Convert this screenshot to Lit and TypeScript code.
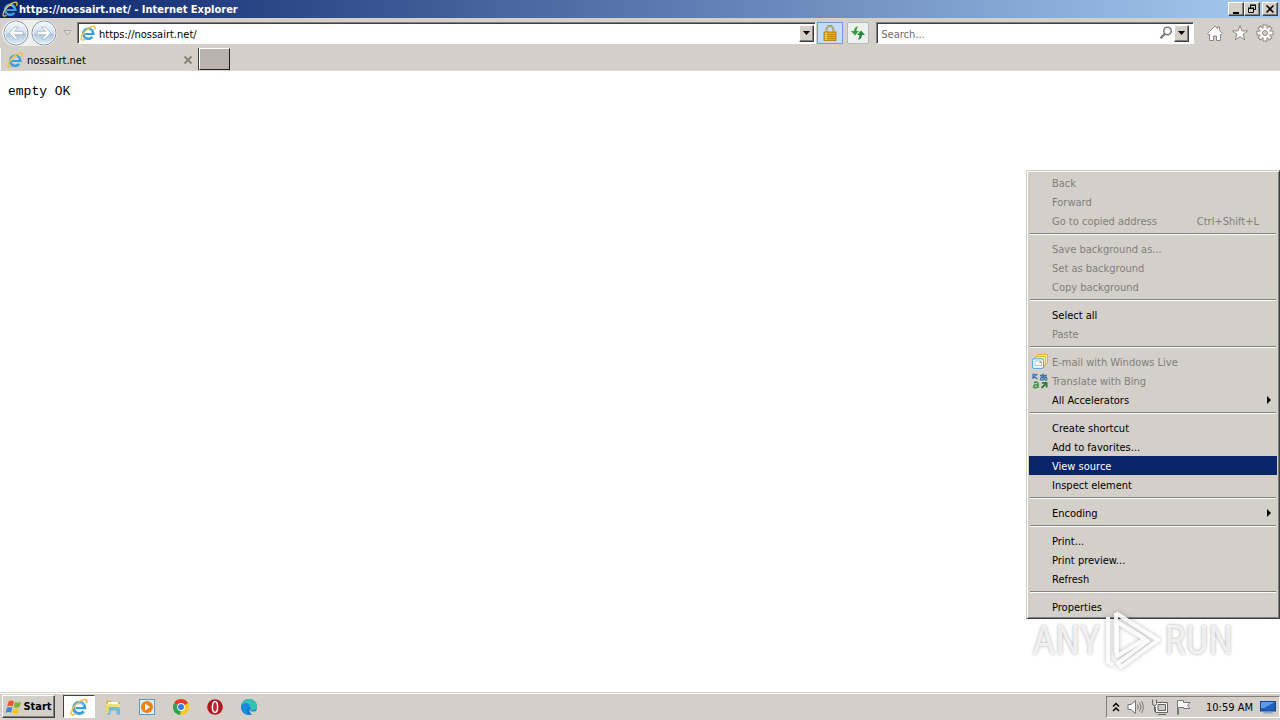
import { LitElement, html, css, svg, nothing } from "lit";
import { customElement, state } from "lit/decorators.js";
import { classMap } from "lit/directives/class-map.js";

type Entry = { label: string; off?: boolean; key?: string; sub?: boolean; icon?: unknown };

const ieLogo = html`<svg class="ico" viewBox="0 0 16 16" aria-hidden="true">
  <circle cx="8.2" cy="8.8" r="5" fill="none" stroke="#3a9fe0" stroke-width="2.600" />
  <path d="M5 9h9.4" stroke="#3a9fe0" stroke-width="2" />
  <path d="M10.6 10.1h5v2.2h-3.2z" fill="var(--cut, #fff)" />
  <path d="M4.2 8.2a4.2 4.2 0 0 1 7.8-1.6" fill="none" stroke="#9be0fb" stroke-width="1" />
  <path d="M4.500 14.4c-2 1.200-3.800.8-3.300-1.400C1.800 10 4.800 5.800 8.200 3.400c3.200-2.200 6-2.700 6.700-1.500.4.800 0 2-.4 2.800" fill="none" stroke="#edbf3c" stroke-width="1.400" />
</svg>`;

const mailIcon = html`<svg class="ico" viewBox="0 0 16 16" aria-hidden="true">
  <path d="M5.500 3V.7h10v8.600h-2" fill="#fff2b8" stroke="#e8b21a" />
  <path d="M3.500 5V2.700h10v8.600h-2" fill="#fff2b8" stroke="#e8b21a" />
  <rect x=".6" y="4.800" width="11" height="9.600" rx="1.500" fill="#f2faff" stroke="#4aa3d8" />
  <rect x="3" y="7" width="6.500" height="4.600" fill="#fff" stroke="#8cbbe0" stroke-width=".8" />
  <path d="M7.500 7.500h1.500v1.500h-1.500z" fill="#e77a28" />
</svg>`;

const translateIcon = html`<svg class="ico" viewBox="0 0 16 16" aria-hidden="true">
  <g fill="none" stroke-width="1.300">
    <path d="M1 1v5M5.500 1.200 2 3.500l3.500 2.500M1 1.300h2.500" stroke="#3a76a8" />
    <path d="M8 2.500h7M11 .6c-.6 2.400-.4 4.400.6 6.200M14 3.600c-.8 2.200-2.600 3.600-4.600 3.500-1.600-.4-1-2.800 1.400-3.100 2.600-.3 4.700.5 4 2.500-.3.600-1 .9-1.600 1" stroke="#3a76a8" />
    <path d="M2 9.800c1.600-1.200 4-.8 4 1v4M6 11.800c-2.400-.2-4.400.3-4.400 1.700 0 1.800 3.400 1.500 4.400-.4" stroke="#3d9a45" stroke-width="1.600" />
    <path d="M9.500 15 14 10.500M10 9.800h4.600v4.700" stroke="#2c8038" stroke-width="1.800" />
  </g>
</svg>`;

const groups: Entry[][] = [
  [
    { label: "Back", off: true },
    { label: "Forward", off: true },
    { label: "Go to copied address", off: true, key: "Ctrl+Shift+L" },
  ],
  [
    { label: "Save background as...", off: true },
    { label: "Set as background", off: true },
    { label: "Copy background", off: true },
  ],
  [{ label: "Select all" }, { label: "Paste", off: true }],
  [
    { label: "E-mail with Windows Live", off: true, icon: mailIcon },
    { label: "Translate with Bing", off: true, icon: translateIcon },
    { label: "All Accelerators", sub: true },
  ],
  [
    { label: "Create shortcut" },
    { label: "Add to favorites..." },
    { label: "View source" },
    { label: "Inspect element" },
  ],
  [{ label: "Encoding", sub: true }],
  [{ label: "Print..." }, { label: "Print preview..." }, { label: "Refresh" }],
  [{ label: "Properties" }],
];

const shared = css`
  * { box-sizing: border-box; }
  button, input {
    font: inherit; color: inherit; margin: 0; padding: 0; border: 0;
    border-radius: 0; background: none; outline: none;
  }
  button { display: flex; align-items: center; justify-content: center; flex: none; }
  svg { display: block; flex: none; }
  .ico { width: 16px; height: 16px; }
  .raised {
    background: #d4d0c8;
    border: 1px solid; border-color: #fff #404040 #404040 #fff;
    box-shadow: inset -1px -1px #808080;
  }
`;

@customElement("context-menu")
export class ContextMenu extends LitElement {
  @state() active = "View source";

  static styles = [shared, css`
    :host {
      display: block; padding: 1px; background: #d4cfc8;
      border: 1px solid; border-color: #d4d0c8 #404040 #404040 #d4d0c8;
      box-shadow: inset 1px 1px #fff, inset -1px -1px #808080;
    }
    .menu { padding: 1px; }
    .item {
      display: grid; grid-template-columns: 16px 1fr auto 8px; column-gap: 4px;
      width: 100%; height: 19px; padding: 0 4px 0 3px; text-align: left; white-space: nowrap;
      line-height: 17px;
    }
    .item span { padding-top: 2px; }
    .item .pic { padding: 0; }
    .item.off { color: #808080; }
    .item.on { background: #0a246a; color: #fff; }
    .sep { height: 2px; margin: 3px 1px 4px; background: #808080; border-bottom: 1px solid #fff; }
    .key { padding-right: 2px; }
    .arrow { width: 8px; height: 8px; }
  `];

  render() {
    return html`<div class="menu" role="menu">
      ${groups.map((g, i) => html`
        ${i ? html`<div class="sep" role="separator"></div>` : nothing}
        ${g.map((e) => html`<button
          role="menuitem"
          ?disabled=${!!e.off}
          class=${classMap({ item: true, off: !!e.off, on: e.label === this.active })}
          @mouseenter=${() => (this.active = e.label)}
        >
          <span class="pic">${e.icon ?? nothing}</span><span>${e.label}</span>
          <span class="key">${e.key ?? nothing}</span>
          ${e.sub ? html`<svg class="arrow" viewBox="0 0 8 8"><path d="M2 0v8l4-4z" fill="currentColor" /></svg>` : nothing}
        </button>`)}
      `)}
    </div>`;
  }
}

const down = html`<svg width="7" height="4" viewBox="0 0 7 4"><path d="M0 0h7L3.500 4z" fill="#000" /></svg>`;

const roundArrow = (flip: boolean) => html`<svg width="26" height="26" viewBox="0 0 26 26">
  <defs><linearGradient id="g" x2="0" y2="1">
    <stop offset="0" stop-color="#f7fafc" /><stop offset=".5" stop-color="#d3e0ec" />
    <stop offset=".55" stop-color="#aec6dc" /><stop offset="1" stop-color="#e3f2fb" />
  </linearGradient></defs>
  <circle cx="13" cy="13" r="12" fill="url(#g)" stroke="#8793a0" />
  <circle cx="13" cy="13" r="11" fill="none" stroke="#f4f8fb" />
  <g transform=${flip ? "rotate(180 13 13)" : "rotate(0)"}>
    <path d="m6 13 6-6h3.500L11.300 11.300H20v3.400h-8.700L15.500 19H12z" fill="#fff" stroke="#9fb2c4" stroke-width=".8" />
  </g>
</svg>`;

const gearTeeth = [0, 45, 90, 135, 180, 225, 270, 315];

@customElement("app-root")
export class AppRoot extends LitElement {
  static styles = [shared, css`
    :host {
      display: flex; flex-direction: column; position: relative; height: 100vh; overflow: hidden;
      background: #fff; color: #000;
      font: 11px/14px "DejaVu Sans Condensed", "DejaVu Sans", sans-serif;
    }
    .title {
      display: flex; align-items: center; gap: 1px; height: 18px; padding: 0 2px; flex: none;
      background: linear-gradient(90deg, #0a246a, #a6caf0); color: #fff; --cut: #0a246a;
    }
    .title h1 { flex: 1; margin: 0; padding-top: 1px; font-size: 11px; line-height: 14px; font-weight: bold; white-space: nowrap; }
    .wins { display: flex; }
    .wins button { width: 16px; height: 14px; }
    .wins button:last-child { margin-left: 2px; }
    .bar {
      display: flex; align-items: center; height: 30px; flex: none; background: #d4cfc8;
      padding: 0 6px 0 2px;
    }
    .nav { display: flex; gap: 2px; padding-left: 1px; border-radius: 13px; background: #eeeeec; }
    .nav button, .nav svg { width: 26px; height: 26px; }
    .recent { width: 20px; }
    .field {
      display: flex; align-items: center; height: 22px; min-width: 0; background: #fff; padding: 1px;
      border: 1px solid; border-color: #808080 #fff #fff #808080; box-shadow: inset 1px 1px #404040;
    }
    .field input { flex: 1; min-width: 0; height: 18px; padding: 2px 4px 0 3px; }
    .field input::placeholder { color: #6d6d6d; opacity: 1; }
    .drop { width: 15px; height: 17px; }
    .addr { flex: 26; padding-left: 2px; }
    .search { flex: 11; padding-right: 4px; }
    .lock { width: 26px; height: 22px; margin: 0 4px 0 1px; background: #c6dcf5; border: 1px solid #6d9de0; }
    .sync { width: 22px; height: 22px; margin-right: 7px; background: #edf1ee; border: 1px solid #b3b8b8; border-radius: 2px; }
    .tools { display: flex; gap: 7px; margin-left: 12px; }
    .tabs { display: flex; height: 23px; flex: none; background: #d4cfc8; border-bottom: 1px solid #dcd8d1; --cut: #d4cfc8; }
    .tab { display: flex; align-items: center; gap: 4px; width: 199px; padding: 2px 5px 0 6px; border-left: 1px solid #fff; border-right: 1px solid #404040; }
    .tab span { flex: 1; padding-top: 1px; }
    .newtab { width: 31px; height: 22px; background: #b9b2ad; border: 1px solid; border-color: #fff #202020 #202020 #fff; }
    main { flex: 1; background: #fff; }
    pre { margin: 13px 8px; font: 13px/15px "Liberation Mono", monospace; }
    .ctx { position: absolute; right: 0; top: 170px; width: 254px; }
    .mark {
      position: absolute; right: 47px; bottom: 48px; display: flex; align-items: center; gap: 4px;
      font: 40px/62px "Roboto Condensed", "Liberation Sans", sans-serif; color: rgba(255, 255, 255, .8);
      text-shadow: 0 0 3px rgba(0, 0, 0, .35); pointer-events: none;
    }
    .mark svg { filter: drop-shadow(0 0 2px rgba(0, 0, 0, .3)); }
    footer {
      display: flex; align-items: center; height: 28px; flex: none; padding-left: 2px; background: #d4cfc8;
      border-top: 1px solid #d4d0c8; box-shadow: inset 0 1px #fff;
    }
    .start { width: 53px; height: 23px; font-weight: bold; margin-right: 8px; }
    .apps { display: flex; align-items: center; gap: 2px; flex: 1; }
    .apps button { width: 32px; height: 23px; }
    .apps svg { width: 18px; height: 18px; }
    .apps .down { background: #fff; border: 1px solid; border-color: #404040 #fff #fff #404040; }
    .tray {
      display: flex; align-items: center; gap: 7px; height: 22px; padding: 0 3px 0 5px;
      border: 1px solid; border-color: #808080 #fff #fff #808080;
    }
    .tray time { padding: 2px 0 0 7px; }
  `];

  render() {
    return html`
      <header class="title">
        ${ieLogo}
        <h1>https://nossairt.net/ - Internet Explorer</h1>
        <div class="wins">
          <button class="raised" aria-label="Minimize"><svg width="12" height="10" viewBox="0 0 12 10"><path d="M3 8h6v2H3z" /></svg></button>
          <button class="raised" aria-label="Restore"><svg width="12" height="10" viewBox="0 0 12 10"><path d="M4.500 4V1.500h5v4H8M4 1h6M2.500 4.500h5v4h-5zM2 4h6" fill="none" stroke="#000" /></svg></button>
          <button class="raised" aria-label="Close"><svg width="12" height="10" viewBox="0 0 12 10"><path d="m2.500 1.500 7 7m0-7-7 7" stroke="#000" stroke-width="1.600" /></svg></button>
        </div>
      </header>
      <nav class="bar">
        <div class="nav">
          <button aria-label="Back">${roundArrow(false)}</button>
          <button aria-label="Forward">${roundArrow(true)}</button>
        </div>
        <button class="recent" aria-label="Recent pages"><svg width="9" height="6" viewBox="0 0 9 6"><path d="M1 .5h7L4.500 5z" fill="#e4e1dc" stroke="#aaa6a0" /></svg></button>
        <div class="field addr">
          ${ieLogo}
          <input aria-label="Address" value="https://nossairt.net/" />
          <button class="drop raised" aria-label="Show addresses">${down}</button>
        </div>
        <button class="lock" aria-label="Security report"><svg class="ico" viewBox="0 0 16 16">
          <path d="M4.500 8V4.500a3.500 3.500 0 0 1 7 0V8" fill="none" stroke="#8a7a45" stroke-width="1.800" />
          <path d="M4.500 8V4.500a3.500 3.500 0 0 1 7 0V8" fill="none" stroke="#e6d9a4" stroke-width=".7" />
          <rect x="2" y="7" width="12" height="8.500" fill="#e9a91c" stroke="#a87510" stroke-width=".8" />
          <path d="M2.500 9.500h11M2.500 11.500h11M2.500 13.500h11" stroke="#b97d0b" stroke-width=".7" />
          <path d="M4 7.500v7.500" stroke="#ffdf73" />
        </svg></button>
        <button class="sync" aria-label="Refresh"><svg class="ico" viewBox="0 0 16 16">
          <path d="M8 1.500Q4.300 1.500 4 6H1l4 4.500L9 6H6.500Q6.500 3.500 8 1.500z" fill="#36a041" />
          <path d="M8 14.500q3.700 0 4-4.500h3l-4-4.500L7 10h2.500q0 2.500-1.500 4.500z" fill="#26853a" />
        </svg></button>
        <div class="field search">
          <input aria-label="Search" placeholder="Search..." />
          <svg class="ico" viewBox="0 0 16 16"><circle cx="9.500" cy="6" r="3.800" fill="none" stroke="#777" stroke-width="1.500" /><path d="M6.700 9 2.500 13.300" stroke="#777" stroke-width="2.200" /></svg>
          <button class="drop raised" aria-label="Search options">${down}</button>
        </div>
        <div class="tools">
          <button aria-label="Home"><svg width="18" height="18" viewBox="0 0 18 18"><path d="M9 2 1.500 9.500 3 11l.5-.5v6h4v-4.500h3v4.500h4v-6l.5.5 1.500-1.500-3-3V3h-2v1.500z" fill="#fff" stroke="#8b8782" /></svg></button>
          <button aria-label="Favorites"><svg width="18" height="18" viewBox="0 0 18 18"><path d="m9 1.500 1.900 5.400h5.700L12 10.300l1.800 5.700L9 12.500 4.200 16 6 10.300 1.400 6.900h5.700z" fill="#fff" stroke="#8b8782" /></svg></button>
          <button aria-label="Tools"><svg width="18" height="18" viewBox="0 0 18 18">
            ${gearTeeth.map((a) => svg`<rect x="7.200" y="1" width="3.600" height="4.500" fill="#fff" stroke="#8b8782" transform="rotate(${a} 9 9)" />`)}
            <circle cx="9" cy="9" r="5.300" fill="#fff" stroke="#8b8782" stroke-width=".8" />
            ${gearTeeth.map((a) => svg`<rect x="7.700" y="2" width="2.600" height="4" fill="#fff" transform="rotate(${a} 9 9)" />`)}
            <circle cx="9" cy="9" r="2.500" fill="#d4cfc8" stroke="#8b8782" />
          </svg></button>
        </div>
      </nav>
      <div class="tabs">
        <div class="tab">${ieLogo}<span>nossairt.net</span>
          <button aria-label="Close tab"><svg width="10" height="10" viewBox="0 0 10 10"><path d="m1.500 1.500 7 7m0-7-7 7" stroke="#858079" stroke-width="1.800" /></svg></button>
        </div>
        <button class="newtab" aria-label="New tab"></button>
      </div>
      <main><pre>empty OK</pre></main>
      <context-menu class="ctx"></context-menu>
      <div class="mark"><span>ANY</span>
        <svg width="56" height="62" viewBox="0 0 56 62" fill="none" stroke="#fff" stroke-opacity=".9" stroke-width="4" stroke-linejoin="round">
          <path d="M11 3v40M3 7v45l5 3M11 3l42 27-37 27-3-4 31-23" /><path d="M12 12v34l28-17z" />
        </svg>
        <span>RUN</span></div>
      <footer>
        <button class="start raised"><svg width="18" height="18" viewBox="0 0 18 18">
          <path d="M3.500 3.500C5.500 2 7.500 2.500 9 3.500L7.700 8.600c-2-1-3.700-1-5.500.2z" fill="#e8582a" />
          <path d="M10 4c2 1 4 1 6-.2l-1.500 5.300c-2 1-4 1-5.800 0z" fill="#77b52c" />
          <path d="M2 9.800c2-1.200 3.500-1.100 5.400-.1L6 14.800c-1.700-1-3.500-1-5.500.2z" fill="#3a85d8" />
          <path d="M8.400 10.200c2 1 3.900 1 5.800 0l-1.400 5c-2 1.200-4 1.100-5.800.1z" fill="#f6c22c" />
        </svg>Start</button>
        <div class="apps">
          <button class="down" aria-label="Internet Explorer">${ieLogo}</button>
          <button aria-label="File Explorer"><svg viewBox="0 0 18 18"><path d="M2 2.500h5l1 1.500h8V8H2z" fill="#dcb64a" /><path d="M4 4h10v5H4z" fill="#fff" /><path d="M2 6h14v5H2z" fill="#f4dc84" /><path d="M3 16.500V11q0-2 2-2h9q2 0 2 2v5.500h-3.500v-4h-6v4z" fill="#6fb9e0" /><path d="M2 8h3v7H2z" fill="#ecd37d" /></svg></button>
          <button aria-label="Media Player"><svg viewBox="0 0 18 18"><rect x="1.500" y="1.500" width="15" height="15" fill="#d8ebf8" stroke="#5b9ace" /><circle cx="9" cy="9" r="6" fill="#ee8213" /><path d="M7 5.500v7l5-3.500z" fill="#fff" /></svg></button>
          <button aria-label="Chrome"><svg viewBox="0 0 18 18"><circle cx="9" cy="9" r="8" fill="#f8c81c" /><path d="M9 9 2.100 5A8 8 0 0 1 16 5z" fill="#e23b2e" /><path d="M9 9 2.100 5a8 8 0 0 0 6 12z" fill="#2ba24c" /><circle cx="9" cy="9" r="3.900" fill="#fff" /><circle cx="9" cy="9" r="3" fill="#3b7de8" /></svg></button>
          <button aria-label="Opera"><svg viewBox="0 0 18 18"><circle cx="9" cy="9" r="7.800" fill="#b3161c" /><ellipse cx="9" cy="9" rx="2.600" ry="5.400" fill="#c9222a" stroke="#fff" stroke-width="1.500" /></svg></button>
          <button aria-label="Edge"><svg viewBox="0 0 18 18"><circle cx="9" cy="9" r="8" fill="#1375cf" /><path d="M1 9a8 8 0 0 1 16 0c0 2.500-2 3.500-4 3.500-2.500 0-3.500-1-2.500-2.500C11 7 5 5 1 9z" fill="#34c3b3" /><path d="M1.200 8C4 4 9 4 10 9c-4 0-4 5-1 8A8 8 0 0 1 1.200 8z" fill="#1b8be0" /><path d="M9.800 10.500c-.6 2.500 3.700 4 6.200 2.500l1.600 1-2 2.600c-4 1.400-7-2.100-5.800-6.100z" fill="#d4cfc8" /></svg></button>
        </div>
        <div class="tray">
          <svg width="8" height="10" viewBox="0 0 8 10"><path d="m1 4.500 3-3 3 3M1 9l3-3 3 3" fill="none" stroke="#000" stroke-width="1.500" /></svg>
          <svg width="17" height="16" viewBox="0 0 17 16"><path d="M1 5.500h3L8.500 1.500v13L4 10.500H1z" fill="#fff" stroke="#777" /><path d="M10.500 5.500q1.500 2.500 0 5M12.500 3.500q3 4.500 0 9M14.500 2q3.500 6 0 12" fill="none" stroke="#777" /></svg>
          <svg width="17" height="16" viewBox="0 0 17 16"><path d="M5.500 4.500h10v8h-10z" fill="#cfcac4" stroke="#fff" stroke-width="2.500" /><path d="M5 3.500h11.500v10H4.500V8M7 5.500h7.500v6H7zM7 15.500h8M1.500.5v4q0 2 2 2t2-2v-4M3.500 6.500v6" fill="none" stroke="#666" /></svg>
          <svg width="17" height="16" viewBox="0 0 17 16"><path d="M2.500 15.500V1.500h6v2h6.500l-2.500 3 2.500 3H8.500V8.500h-5v7z" fill="#fff" stroke="#777" /></svg>
          <time>10:59 AM</time>
          <svg width="16" height="16" viewBox="0 0 16 16"><rect x=".5" y="2.500" width="15" height="9.500" fill="#1e5fc0" stroke="#17458c" /><path d="M1 3h14L4 9H1z" fill="#5d9be8" /><path d="M4 13h8l1.500 1.500H2.500z" fill="#8aa6c8" /></svg>
        </div>
      </footer>
    `;
  }
}
